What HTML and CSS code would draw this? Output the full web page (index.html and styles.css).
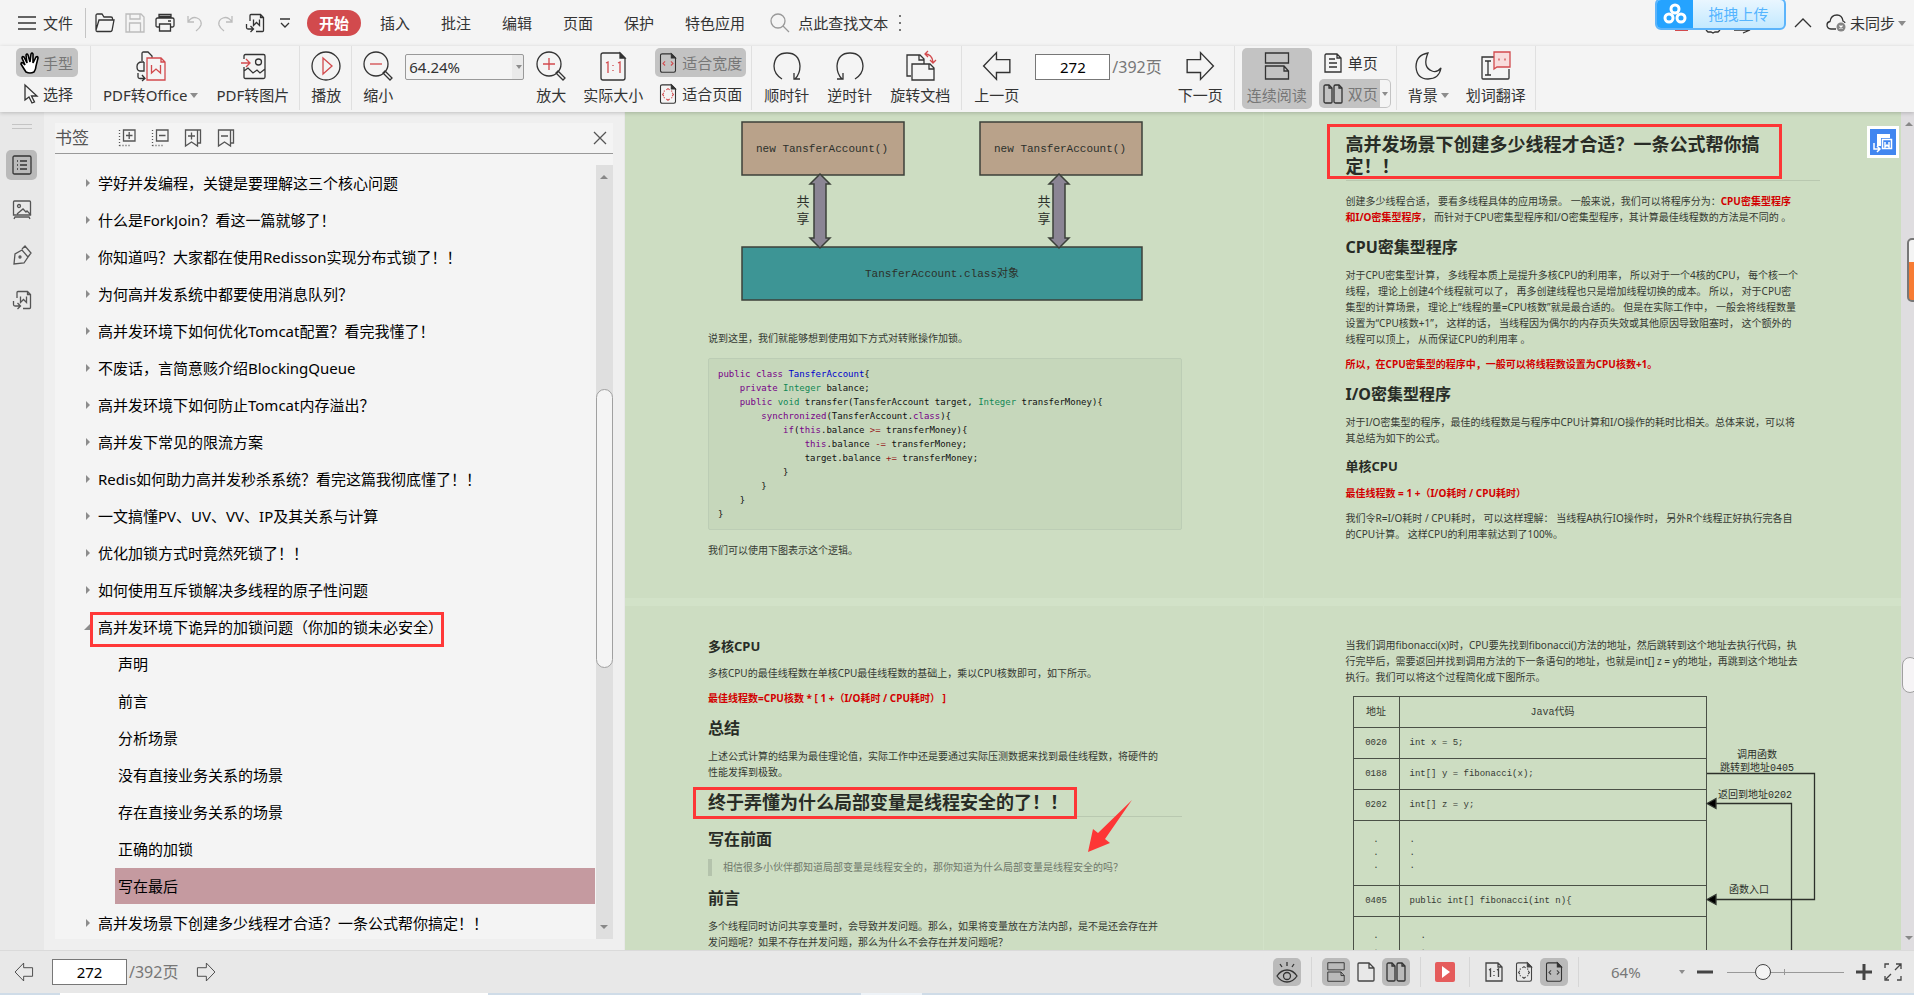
FILE: index.html
```html
<!DOCTYPE html>
<html lang="zh-CN">
<head>
<meta charset="utf-8">
<title>PDF 阅读器</title>
<link rel="stylesheet" href="styles.css">
</head>
<body>
<svg class="sprite" aria-hidden="true">
  <symbol id="i-word" viewBox="0 0 20 20"><path d="M5 8V2.500q0-1 1-1h9.500l3 3v13q0 1-1 1H11M15.500 1.500v3h3"/><path d="M8.500 6.500v6l3-3 3 3v-6M1.500 11v3.500q0 1.500 1.500 1.500h5M5.500 13l3 3-3 3"/></symbol>
  <symbol id="i-width" viewBox="0 0 20 24"><path d="M3 1h11l5 5v15q0 2-2 2H3q-2 0-2-2V3q0-2 2-2z"/><path d="M14 1v5h5z" fill="currentColor"/><path class="accent" d="M6.500 10L4 12.500 6.500 15M13.500 10l2.500 2.500-2.500 2.500"/></symbol>
  <symbol id="i-fit" viewBox="0 0 20 24"><path d="M3 1h11l5 5v15q0 2-2 2H3q-2 0-2-2V3q0-2 2-2z"/><path d="M14 1v5h5z" fill="currentColor"/><path class="accent" d="M8 7l2-1.500L12 7M8 18l2 1.500 2-1.500M5 10.500L3.500 12.500 5 14.500M15 10.500l1.500 2-1.500 2M6 8l-1 1M14 8l1 1M6 17l-1-1M14 17l1-1"/></symbol>
  <symbol id="i-left" viewBox="0 0 28 28"><path d="M1.500 14L13.500 1.500V8H26v12H13.500v6.500z"/></symbol>
  <symbol id="i-right" viewBox="0 0 28 28"><path d="M26.500 14L14.500 1.500V8H2v12h12.500v6.500z"/></symbol>
  <symbol id="i-two" viewBox="0 0 20 20"><path d="M6 1H2.500Q1 1 1 2.500v15Q1 19 2.500 19H8q1 0 1-1V4zM16 1h-3.500Q11 1 11 2.500v15q0 1.500 1.500 1.500H18q1 0 1-1V4z"/><path d="M6 1v3h3M16 1v3h3"/></symbol>
  <symbol id="i-cont" viewBox="0 0 26 28"><path d="M1.500 1h23v10h-23zM1.500 27V14H20l4.500 5v8zM20 14v5h4.500"/></symbol>
</svg>

<header class="menubar">
  <button class="file"><svg width="18" height="14" viewBox="0 0 18 14"><path d="M0 1h18M0 7h18M0 13h18"/></svg>文件</button>
  <div class="quick">
    <button aria-label="打开"><svg width="20" height="20" viewBox="0 0 20 20"><path d="M1 17V2.500Q1 1 2.500 1H7l2 3h7q1.500 0 1.500 1.500V7M1 17l3-10h15l-2 10.500q-.3 1-1.500 1H2Q1 18.500 1 17z"/></svg></button>
    <button class="dim" aria-label="保存"><svg width="20" height="20" viewBox="0 0 20 20"><path d="M1 1h15l3 3v15H1zM5 1v5h10V1M4.500 19v-9h11v9"/></svg></button>
    <button aria-label="打印"><svg width="20" height="20" viewBox="0 0 20 20"><path d="M4 5V1.500h12V5M4 14H2.500Q1 14 1 12.500v-6Q1 5 2.500 5h15Q19 5 19 6.500v6q0 1.500-1.500 1.500H16M4.500 11h11v7h-11zM13 8h3M4 3.500h12"/></svg></button>
    <button class="dim" aria-label="撤销"><svg width="20" height="20" viewBox="0 0 20 20"><path d="M3 3v6h6M3 9q4-6 9-4t4 7q-1 3-5 6"/></svg></button>
    <button class="dim" aria-label="重做"><svg width="20" height="20" viewBox="0 0 20 20"><path d="M17 3v6h-6M17 9q-4-6-9-4t-4 7q1 3 5 6"/></svg></button>
    <button aria-label="转为Word"><svg width="20" height="20"><use href="#i-word"/></svg></button>
    <button aria-label="更多"><svg width="20" height="20" viewBox="0 0 20 20"><path d="M5 6h10M6 10l4 4 4-4"/></svg></button>
  </div>
  <nav class="tabs">
    <button class="on">开始</button><button>插入</button><button>批注</button><button>编辑</button><button>页面</button><button>保护</button><button>特色应用</button>
  </nav>
  <button class="find"><svg width="20" height="20" viewBox="0 0 20 20"><circle cx="8" cy="8" r="7"/><path d="M13 13l6 6"/></svg>点此查找文本<svg class="dots" width="4" height="20" viewBox="0 0 4 20"><path d="M1 2h2v2H1zM1 9h2v2H1zM1 16h2v2H1z"/></svg></button>
  <div class="sync">
    <div class="hidden-tools"><svg width="90" height="6" viewBox="0 0 90 6"><path d="M1 0h13v1H1z" fill="#d24a4d" stroke="none"/><path d="M32 0l2 2h3l2 1 2-1h3l2-2M60 0h16l-7 3"/></svg></div>
    <button class="upload"><span class="upload-mark"><svg width="24" height="22" viewBox="0 0 24 22"><g fill="none" stroke="#fff" stroke-width="3"><circle cx="12" cy="6" r="4"/><circle cx="6" cy="15" r="4"/><circle cx="18" cy="15" r="4"/></g></svg></span><span class="upload-text">拖拽上传</span></button>
    <button aria-label="折叠"><svg width="18" height="12" viewBox="0 0 18 12"><path d="M1 10l8-8 8 8"/></svg></button>
    <button class="cloud"><svg width="20" height="18" viewBox="0 0 20 18"><path d="M10 15H5q-4-.5-4-4 0-3 3-3.500Q5 1 11 1q5 0 6 6 2 1 2 2"/><circle cx="15" cy="13" r="4.500" fill="#858585" stroke="none"/><path d="M13.500 11.500l3 3M16.500 11.500l-3 3" stroke="#fff"/></svg>未同步<i class="caret"></i></button>
  </div>
</header>

<div class="ribbon">
  <div class="group g-hand">
    <button class="row on"><svg width="20" height="22" viewBox="0 0 20 22"><path class="bold" d="M6 20q-2-3-5-8 0-2 2-1l2 2L2 6q0-2 2-1l3 6L6 3q1-2 2 0l2 7 1-8q1-2 2 0v9l3-6q2-1 2 1l-2 8q0 3-2 6-4 2-8 0z"/></svg>手型</button>
    <button class="row"><svg width="20" height="22" viewBox="0 0 20 22"><path d="M5 2v15l4-3 3 6 2.500-1-3-6H17z"/></svg>选择</button>
  </div>
  <div class="group g-convert">
    <button class="tool"><svg width="30" height="30" viewBox="0 0 30 30"><path d="M6 10V2.500Q6 1 7.500 1H12l4 4v2M8 11H6q-5 0-5 4.500T4 20h4v-9M2 22v4q0 1.500 2 1.500h5M6 24l3 3.500L6 30"/><path class="accent" d="M11 7h14l4 4v18H11zM25 7v4h4M15.500 14v8l4.500-4 4.500 4v-8" /></svg><span>PDF转Office<i class="caret"></i></span></button>
    <button class="tool"><svg width="30" height="30" viewBox="0 0 30 30"><path d="M6 8V5q0-1.500 1.500-1.500h18Q27 3.500 27 5v21q0 1.500-1.500 1.500h-18Q6 27.500 6 26v-6l4-3 5 5 4-3 3 3 5-4M6 16v4"/><circle cx="20.500" cy="11" r="3"/><path class="accent" d="M3 12h8M8 8l4 4-4 4"/></svg><span>PDF转图片</span></button>
  </div>
  <div class="group g-play">
    <button class="tool"><svg width="30" height="30" viewBox="0 0 30 30"><circle cx="15" cy="15" r="14"/><path class="accent" d="M12 7l9 8-9 8z"/></svg><span>播放</span></button>
  </div>
  <div class="group g-zoom">
    <button class="tool"><svg width="30" height="30" viewBox="0 0 30 30"><circle cx="13" cy="13" r="12"/><path d="M20 22l2-2 7 7-2 2z"/><path class="accent" d="M7 13h12"/></svg><span>缩小</span></button>
    <div class="zoombox"><select aria-label="缩放比例"><option>64.24%</option></select><i class="caret"></i></div>
    <button class="tool"><svg width="30" height="30" viewBox="0 0 30 30"><circle cx="13" cy="13" r="12"/><path d="M20 22l2-2 7 7-2 2z"/><path class="accent" d="M7 13h12M13 7v12"/></svg><span>放大</span></button>
    <button class="tool actual"><svg width="30" height="30" viewBox="0 0 30 30"><path d="M5 2h17l5 5v20q0 2-2 2H5q-2 0-2-2V4q0-2 2-2z"/><path d="M22 2v5h5z" fill="currentColor"/><path class="accent" d="M8 12l2-1v11M20 12l2-1v11M15 14v1M15 19v1"/></svg><span>实际大小</span></button>
    <div class="stack">
      <button class="row on"><svg width="18" height="20"><use href="#i-width"/></svg>适合宽度</button>
      <button class="row"><svg width="18" height="20"><use href="#i-fit"/></svg>适合页面</button>
    </div>
  </div>
  <div class="group g-rotate">
    <button class="tool"><svg width="30" height="30" viewBox="0 0 30 30"><path d="M10 28Q2 23 2 15 3 2 15 2t13 13q0 8-5 13M22 22v6h6"/></svg><span>顺时针</span></button>
    <button class="tool"><svg width="30" height="30" viewBox="0 0 30 30"><path d="M20 28q8-5 8-13Q27 2 15 2T2 15q0 8 5 13M8 22v6H2"/></svg><span>逆时针</span></button>
    <button class="tool"><svg width="30" height="30" viewBox="0 0 30 30"><path d="M6 25H2V4h13l4 4v5M14 4v5h5M7 29V13h18l4 4v12zM24 13v5h5"/><path class="accent" d="M23 0l-3 3 3 3M20 3q7 0 8 8M25 9l3 3 3-3"/></svg><span>旋转文档</span></button>
  </div>
  <div class="group g-pager">
    <button class="tool"><svg width="30" height="30"><use href="#i-left"/></svg><span>上一页</span></button>
    <label class="page-no"><input value="272" aria-label="页码"><span>/392页</span></label>
    <button class="tool"><svg width="30" height="30"><use href="#i-right"/></svg><span>下一页</span></button>
  </div>
  <div class="group g-read">
    <button class="tool on"><svg width="26" height="30"><use href="#i-cont"/></svg><span>连续阅读</span></button>
    <div class="stack">
      <button class="row"><svg width="20" height="20" viewBox="0 0 20 20"><path d="M3 1h11l4 4v14H2V2zM14 1v4h4M6 6h6M6 10h8M6 14h8"/></svg>单页</button>
      <button class="row on split"><svg width="20" height="20"><use href="#i-two"/></svg>双页<span class="drop"><i class="caret"></i></span></button>
    </div>
  </div>
  <div class="group g-extra">
    <button class="tool"><svg width="30" height="30" viewBox="0 0 30 30"><path d="M15 2q-6 14 4 18 5 2 9-3-2 11-13 11T3 16Q3 4 15 2z"/></svg><span>背景<i class="caret"></i></span></button>
    <button class="tool"><svg width="30" height="30" viewBox="0 0 30 30"><path d="M13 6H1v21q0 1 1 1h25q1 0 1-1v-9M4 10h6M4 24h6M7 10v14"/><path class="accent fill" d="M13 1h16v15H16l-3 2z"/><path class="accent" d="M18 7.500v2M24 7.500v2"/></svg><span>划词翻译</span></button>
  </div>
</div>

<main class="work">
  <nav class="rail">
    <i class="grip"></i>
    <button class="on" aria-label="书签"><svg width="20" height="20" viewBox="0 0 20 20"><path d="M2.500 1h15Q19 1 19 2.500v15q0 1.500-1.500 1.500h-15Q1 19 1 17.500v-15Q1 1 2.500 1zM5 6h1M8 6h7M5 10h1M8 10h7M5 14h1M8 14h7"/></svg></button>
    <button aria-label="缩略图"><svg width="20" height="20" viewBox="0 0 20 20"><path d="M2.500 1h15q1 0 1 1v13h-17V2q0-1 1-1zM5 14l6-5 3 3 1-1 4 4M2 19l1-2h14l1 2"/><circle cx="7" cy="6" r="1.500"/></svg></button>
    <button aria-label="签名"><svg width="20" height="20" viewBox="0 0 20 20"><path d="M2 19l1-10 7-4 6 7-4 6zM10 4l3-3 6 7-3 4"/><circle cx="8" cy="12" r="1"/></svg></button>
    <button aria-label="转为Word"><svg width="20" height="20"><use href="#i-word"/></svg></button>
  </nav>
  <aside class="panel">
    <div class="panel-inner">
      <div class="panel-head">
        <h2>书签</h2>
        <button aria-label="展开"><svg width="18" height="18" viewBox="0 0 18 18"><path d="M5.500 1H17v11H5.500zM8 6.500h6.500M11.200 3v7"/><path stroke-dasharray="1 2" d="M1.500 1v16M1.500 16.500H12"/></svg></button>
        <button aria-label="折叠"><svg width="18" height="18" viewBox="0 0 18 18"><path d="M5.500 1H17v11H5.500zM8 6.500h6.500"/><path stroke-dasharray="1 2" d="M1.500 1v16M1.500 16.500H12"/></svg></button>
        <button aria-label="添加书签"><svg width="18" height="18" viewBox="0 0 18 18"><path d="M1.500 1h12v16l-6-4-6 4zM4 7h7M7.500 3.500v7M13.500 1h3v13h-3"/></svg></button>
        <button aria-label="删除书签"><svg width="18" height="18" viewBox="0 0 18 18"><path d="M1.500 1h12v16l-6-4-6 4zM4 7h7M13.500 1h3v13h-3"/></svg></button>
        <button class="close" aria-label="关闭"><svg width="14" height="14" viewBox="0 0 14 14"><path d="M1 1l12 12M13 1L1 13"/></svg></button>
      </div>
      <div class="panel-body">
        <ul class="tree">
          <li>学好并发编程，关键是要理解这三个核心问题</li>
          <li>什么是ForkJoin？看这一篇就够了！</li>
          <li>你知道吗？大家都在使用Redisson实现分布式锁了！！</li>
          <li>为何高并发系统中都要使用消息队列？</li>
          <li>高并发环境下如何优化Tomcat配置？看完我懂了！</li>
          <li>不废话，言简意赅介绍BlockingQueue</li>
          <li>高并发环境下如何防止Tomcat内存溢出？</li>
          <li>高并发下常见的限流方案</li>
          <li>Redis如何助力高并发秒杀系统？看完这篇我彻底懂了！！</li>
          <li>一文搞懂PV、UV、VV、IP及其关系与计算</li>
          <li>优化加锁方式时竟然死锁了！！</li>
          <li>如何使用互斥锁解决多线程的原子性问题</li>
          <li class="open"><span class="marked">高并发环境下诡异的加锁问题（你加的锁未必安全）</span></li>
          <li class="child">声明</li>
          <li class="child">前言</li>
          <li class="child">分析场景</li>
          <li class="child">没有直接业务关系的场景</li>
          <li class="child">存在直接业务关系的场景</li>
          <li class="child">正确的加锁</li>
          <li class="child current">写在最后</li>
          <li>高并发场景下创建多少线程才合适？一条公式帮你搞定！！</li>
        </ul>
        <div class="bar tree-bar"><i class="up"></i><i class="thumb"></i><i class="down"></i></div>
      </div>
    </div>
  </aside>

  <section class="viewer">
    <div class="pages">
      <article class="page first">
        <svg class="share" width="474" height="209" viewBox="0 0 474 209">
          <g stroke="#3c403a" stroke-width="1.500">
            <path fill="#b9a28a" d="M34 10h162v53H34zM272 10h162v53H272z"/>
            <path fill="#3d9595" d="M34 135h400v53H34z"/>
            <path fill="#8b8594" d="M112 62l10 10h-4v54h4l-10 10-10-10h4V72h-4zM351 62l10 10h-4v54h4l-10 10-10-10h4V72h-4z"/>
          </g>
          <g class="label" text-anchor="middle">
            <text x="114" y="40">new TansferAccount()</text>
            <text x="352" y="40">new TansferAccount()</text>
            <text x="234" y="165">TansferAccount.class对象</text>
            <g class="cn"><text x="95" y="94">共</text><text x="95" y="111">享</text><text x="336" y="94">共</text><text x="336" y="111">享</text></g>
          </g>
        </svg>
        <p>说到这里，我们就能够想到使用如下方式对转账操作加锁。</p>
        <pre class="code"><code><b>public</b> <b>class</b> <em>TansferAccount</em>{</code><code>    <b>private</b> <s>Integer</s> balance;</code><code>    <b>public</b> <s>void</s> transfer(TansferAccount target, <s>Integer</s> transferMoney){</code><code>        <b>synchronized</b>(TansferAccount.<b>class</b>){</code><code>            <b>if</b>(<b>this</b>.balance <u>&gt;=</u> transferMoney){</code><code>                <b>this</b>.balance <u>-=</u> transferMoney;</code><code>                target.balance <u>+=</u> transferMoney;</code><code>            }</code><code>        }</code><code>    }</code><code>}</code></pre>
        <p>我们可以使用下图表示这个逻辑。</p>
      </article>

      <article class="page second">
        <h1 class="mark-wide">高并发场景下创建多少线程才合适？一条公式帮你搞<br>定！！</h1>
        <p>创建多少线程合适， 要看多线程具体的应用场景。 一般来说，我们可以将程序分为：<strong>CPU密集型程序</strong><br><strong>和I/O密集型程序</strong>， 而针对于CPU密集型程序和I/O密集型程序，其计算最佳线程数的方法是不同的 。</p>
        <h2>CPU密集型程序</h2>
        <p>对于CPU密集型计算， 多线程本质上是提升多核CPU的利用率， 所以对于一个4核的CPU， 每个核一个<br>线程， 理论上创建4个线程就可以了， 再多创建线程也只是增加线程切换的成本。 所以， 对于CPU密<br>集型的计算场景， 理论上“线程的量=CPU核数”就是最合适的。 但是在实际工作中， 一般会将线程数量<br>设置为“CPU核数+1”， 这样的话， 当线程因为偶尔的内存页失效或其他原因导致阻塞时， 这个额外的<br>线程可以顶上， 从而保证CPU的利用率 。</p>
        <p><strong>所以，在CPU密集型的程序中，一般可以将线程数设置为CPU核数+1。</strong></p>
        <h2>I/O密集型程序</h2>
        <p>对于I/O密集型的程序，最佳的线程数是与程序中CPU计算和I/O操作的耗时比相关。总体来说，可以将<br>其总结为如下的公式。</p>
        <h3>单核CPU</h3>
        <p><strong>最佳线程数 = 1 +（I/O耗时 / CPU耗时）</strong></p>
        <p>我们令R=I/O耗时 / CPU耗时， 可以这样理解： 当线程A执行IO操作时， 另外R个线程正好执行完各自<br>的CPU计算。 这样CPU的利用率就达到了100%。</p>
      </article>

      <article class="page third">
        <h3>多核CPU</h3>
        <p>多核CPU的最佳线程数在单核CPU最佳线程数的基础上，乘以CPU核数即可，如下所示。</p>
        <p><strong>最佳线程数=CPU核数 * [ 1 +（I/O耗时 / CPU耗时） ]</strong></p>
        <h2>总结</h2>
        <p>上述公式计算的结果为最佳理论值，实际工作中还是要通过实际压测数据来找到最佳线程数，将硬件的<br>性能发挥到极致。</p>
        <h1 class="mark-line">终于弄懂为什么局部变量是线程安全的了！！</h1>
        <h2>写在前面</h2>
        <blockquote>相信很多小伙伴都知道局部变量是线程安全的，那你知道为什么局部变量是线程安全的吗？
          <svg class="pointer" width="46" height="54" viewBox="0 0 46 54"><path fill="#fd3636" d="M1 53L6 30l5 4L45 1 18 40l5 4z"/></svg>
        </blockquote>
        <h2>前言</h2>
        <p>多个线程同时访问共享变量时，会导致并发问题。那么，如果将变量放在方法内部，是不是还会存在并<br>发问题呢？如果不存在并发问题，那么为什么不会存在并发问题呢？</p>
      </article>

      <article class="page fourth">
        <p>当我们调用fibonacci(x)时，CPU要先找到fibonacci()方法的地址，然后跳转到这个地址去执行代码，执<br>行完毕后，需要返回并找到调用方法的下一条语句的地址，也就是int[] z = y的地址，再跳到这个地址去<br>执行。我们可以将这个过程简化成下图所示。</p>
        <div class="calls">
          <table>
            <tr><th>地址</th><th>Java代码</th></tr>
            <tr><td>0020</td><td>int x = 5;</td></tr>
            <tr><td>0188</td><td>int[] y = fibonacci(x);</td></tr>
            <tr><td>0202</td><td>int[] z = y;</td></tr>
            <tr class="tall"><td>.<br>.<br>.</td><td>.<br>.<br>.</td></tr>
            <tr><td>0405</td><td>public int[] fibonacci(int n){</td></tr>
            <tr class="tall"><td>.<br>.<br>.</td><td class="deep">.<br>.<br>.</td></tr>
          </table>
          <svg width="112" height="286" viewBox="0 0 112 286">
            <path fill="none" stroke="#2c302a" d="M0 77.500h107.500v126H8M8 107.500h76.500V286"/>
            <path fill="#000" d="M0 107.500l9-5v10zM0 203.500l9-5v10z"/>
            <g class="label cn" text-anchor="middle"><text x="50" y="62">调用函数</text><text x="50" y="75">跳转到地址0405</text><text x="48" y="102">返回到地址0202</text><text x="42" y="197">函数入口</text></g>
          </svg>
        </div>
      </article>
    </div>
    <button class="convert" aria-label="转换"><svg width="26" height="26" viewBox="0 0 26 26"><path fill="#fff" stroke="none" d="M7 5h13v4h-9v8H7z"/><path fill="none" stroke="#fff" stroke-width="1.500" d="M12.500 10.500h9v9h-9zM15 13v5l2-2 2 2v-5M4 14v6h5M7 17l3 3-3 3"/></svg></button>
    <div class="bar page-bar"><i class="up"></i><i class="thumb"></i><i class="down"></i><i class="dock"></i></div>
  </section>
</main>

<footer class="status">
  <button aria-label="上一页"><svg width="20" height="20"><use href="#i-left"/></svg></button>
  <label class="page-no"><input value="272" aria-label="当前页"><span>/392页</span></label>
  <button class="next" aria-label="下一页"><svg width="20" height="20"><use href="#i-right"/></svg></button>
  <div class="modes">
    <button class="on" aria-label="护眼"><svg width="22" height="22" viewBox="0 0 22 22"><path d="M1 15q4-6 10-6t10 6q-4 6-10 6T1 15zM4 3l2 3M11 1v4M18 3l-2 3"/><circle cx="11" cy="15" r="3.500"/></svg></button>
    <i class="sep"></i>
    <button class="on" aria-label="连续"><svg width="20" height="20"><use href="#i-cont"/></svg></button>
    <button aria-label="单页"><svg width="20" height="20" viewBox="0 0 20 20"><path d="M3 1h10l5 5v12q0 1-1 1H3q-1 0-1-1V2q0-1 1-1zM13 1v5h5"/></svg></button>
    <button class="on" aria-label="双页"><svg width="20" height="20"><use href="#i-two"/></svg></button>
    <i class="sep"></i>
    <button aria-label="播放"><svg width="20" height="20" viewBox="0 0 20 20"><rect width="20" height="20" rx="2" fill="#e55c5c" stroke="none"/><path d="M7 4l8 6-8 6z" fill="#fff" stroke="none"/></svg></button>
    <i class="sep"></i>
    <button aria-label="实际大小"><svg width="20" height="20" viewBox="0 0 20 20"><path d="M2 1h12l4 4v14H2zM14 1v4h4M5 8l1.500-1v8M13 8l1.500-1v8M10 9v1M10 13v1"/></svg></button>
    <button aria-label="适合页面"><svg width="20" height="20"><use href="#i-fit"/></svg></button>
    <button class="on" aria-label="适合宽度"><svg width="20" height="20"><use href="#i-width"/></svg></button>
    <i class="sep"></i>
  </div>
  <button class="percent">64%<i class="caret"></i></button>
  <div class="scale">
    <button aria-label="缩小"><svg width="16" height="16" viewBox="0 0 16 16"><path class="thick" d="M0 8h16"/></svg></button>
    <div class="slider"><input type="range" min="0" max="100" value="28" aria-label="缩放"><i></i></div>
    <button aria-label="放大"><svg width="16" height="16" viewBox="0 0 16 16"><path class="thick" d="M0 8h16M8 0v16"/></svg></button>
    <button aria-label="全屏"><svg width="18" height="18" viewBox="0 0 18 18"><path d="M1 5V1h4M1 13v4h4M17 13v4h-4M12 1h5v5M17 1l-6 6M7 11l-5 5"/></svg></button>
  </div>
</footer>
<div class="desk"><i></i><b></b></div>
</body>
</html>
```
FILE: styles.css
```css
*, *::before, *::after { box-sizing: border-box; }
html, body { height: 100%; }
body {
  margin: 0;
  display: flex;
  flex-direction: column;
  overflow: hidden;
  background: #f4f4f4;
  color: #333;
  font: 15px/20px "Noto Sans", "Noto Sans CJK SC", sans-serif;
  text-spacing-trim: space-all;
  white-space: nowrap;
}
.sprite { display: none; }
button, input, select { font: inherit; color: inherit; }
button {
  display: flex;
  align-items: center;
  padding: 0;
  border: 0;
  background: none;
}
button svg { flex: none; }
svg, symbol { fill: none; stroke: currentColor; stroke-width: 1.3; overflow: visible; }
svg text { stroke: none; }
.accent { stroke: var(--accent, #d24a4d); }
.fill { fill: #f8dcdc; }
.bold { stroke: #000; fill: #fff; stroke-width: 1.6; }
.thick { stroke-width: 3; }
.caret {
  display: inline-block;
  border: 4px solid transparent;
  border-top: 5px solid #8c8c8c;
  border-bottom: 0;
}

/* menu row */
.menubar { display: flex; align-items: center; height: 46px; padding-left: 18px; flex: none; }
.file { gap: 7px; height: 30px; padding-right: 12px; border-right: 1px solid #c4c4c4; }
.quick { display: flex; gap: 10px; margin-left: 9px; }
.dim { color: #bcbcbc; }
.tabs { display: flex; gap: 31px; margin-left: 12px; }
.tabs .on {
  height: 26px;
  margin-right: -12px;
  padding: 0 12px;
  border-radius: 13px;
  background: #d24a4d;
  color: #fff;
  font-weight: 700;
}
.find { gap: 8px; margin-left: 25px; }
.find svg { stroke: #999; }
.find .dots { fill: #777; stroke: none; margin-left: 2px; }
.sync { position: relative; display: flex; align-items: center; gap: 14px; margin-left: auto; padding-right: 8px; }
.cloud { gap: 4px; }
.cloud .caret { margin-left: -1px; }
.upload {
  position: absolute;
  left: -139px;
  top: -15px;
  width: 131px;
  height: 32px;
  align-items: stretch;
  border: 2px solid #5cb4fb;
  border-radius: 6px;
  overflow: hidden;
  background: linear-gradient(#e9f6ff, #c3e9ff);
  color: #55b5ff;
}
.upload-mark { display: grid; place-items: center; width: 36px; background: #25a3ff; }
.upload-text { flex: 1; align-self: center; text-align: center; }
.hidden-tools { position: absolute; left: -120px; top: 17px; line-height: 0; }

/* ribbon */
.ribbon { display: flex; height: 66px; flex: none; background: #f4f4f4; box-shadow: 0 1px 4px #0003; z-index: 2; }
.group { display: flex; align-items: flex-start; padding-top: 2px; border-right: 1px solid #e0e0e0; height: 64px; }
.tool { flex-direction: column; gap: 4px; padding-top: 3px; height: 61px; }
.row { height: 29px; gap: 5px; padding: 0 4px; border-radius: 5px; }
.on { background: #c3c3c3; color: #777; }
.on svg { color: #333; }
.stack, .g-hand { display: flex; flex-direction: column; gap: 2px; }
.g-hand { padding-left: 16px; padding-right: 12px; }
.g-hand .row { width: 62px; gap: 3px; }
.g-convert { gap: 18px; padding-left: 12px; padding-right: 10px; }
.tool .caret { margin-left: 3px; vertical-align: 3px; }
.g-play { padding-left: 11px; padding-right: 10px; }
.g-zoom { gap: 12px; padding-left: 11px; padding-right: 5px; }
.actual { margin-left: 5px; }
.zoombox { position: relative; margin-top: 6px; }
.zoombox select {
  appearance: none;
  display: block;
  width: 119px;
  height: 26px;
  padding: 0 3px;
  border: 1px solid #999;
  border-radius: 2px;
  background: linear-gradient(to left, #eaeaea 11px, #f4f4f4 11px);
}
.zoombox .caret { position: absolute; right: 2px; top: 11px; border-width: 4px 3px 0; }
.g-rotate { gap: 18px; padding-left: 12px; padding-right: 11px; }
.g-pager { gap: 16px; padding-left: 12px; padding-right: 11px; }
.page-no { display: flex; align-items: center; gap: 2px; color: #777; font-size: 16px; }
.page-no input {
  width: 75px;
  height: 26px;
  border: 1px solid #777;
  padding: 0;
  background: #fff;
  color: #000;
  font-size: 15px;
  text-align: center;
}
.g-pager .page-no { margin-top: 6px; }
.g-read { gap: 7px; padding-left: 7px; padding-right: 5px; }
.g-read .tool { width: 70px; border-radius: 5px; }
.g-read .row { width: 72px; }
.split { position: relative; }
.drop {
  position: absolute;
  right: 1px;
  top: 1px;
  bottom: 1px;
  width: 10px;
  display: grid;
  place-items: center;
  border-radius: 0 4px 4px 0;
  background: #f4f4f4;
}
.drop .caret { margin: 0; border-width: 4px 3px 0; }
.g-extra { gap: 17px; padding-left: 11px; padding-right: 9px; }

/* side rail and bookmarks */
.work { display: flex; flex: 1; min-height: 0; }
.rail { display: flex; flex-direction: column; align-items: center; gap: 15px; width: 44px; padding: 12px 7px 0 6px; background: #e8e8e8; color: #555; }
.grip { width: 20px; height: 5px; border: solid #c4c4c4; border-width: 1px 0; margin-bottom: 6px; }
.rail button { width: 31px; height: 30px; justify-content: center; border-radius: 5px; }
.rail .on { background: #bababa; }
.panel { display: flex; width: 581px; flex: none; padding: 11px 11px 11px 11px; background: #efefef; border-right: 1px solid #e8e8e8; }
.panel-inner { display: flex; flex-direction: column; flex: 1; min-width: 0; background: #f4f4f4; }
.panel-head { display: flex; align-items: center; gap: 15px; height: 31px; flex: none; border-bottom: 1px solid #999; color: #555; }
.panel-head h2 { margin: 0 14px 0 0; font-size: 17px; font-weight: 400; }
.close { margin: 0 6px 0 auto; }
.panel-body { display: flex; flex: 1; min-height: 0; padding-top: 11px; }
.tree { flex: 1; margin: 0; padding: 0; list-style: none; color: #000; }
.tree li { display: flex; align-items: center; height: 36px; margin: 0 1px 1px 31px; }
.tree li::before { content: ""; width: 4px; margin-right: 8px; border: solid transparent; border-width: 4px 0 4px 4px; border-left-color: #8c8c8c; }
.tree .open::before { width: 6px; margin: 0 8px 0 -2px; border-width: 0 0 6px 6px; border-color: transparent transparent #8c8c8c; }
.tree .child { margin-left: 60px; padding-left: 3px; }
.tree .child::before { display: none; }
.tree .current { background: #c59aa0; }
.marked { position: relative; }
.marked::after { content: ""; position: absolute; left: -8px; top: -5px; width: 354px; height: 35px; border: 3px solid #ff3838; }
.bar { position: relative; background: #dfdfdf; }
.up, .down, .thumb, .dock { position: absolute; }
.up { top: 10px; right: 5px; border: 4px solid transparent; border-top: 0; border-bottom-color: #888; }
.down { bottom: 10px; right: 5px; border: 4px solid transparent; border-bottom: 0; border-top-color: #888; }
.tree-bar { width: 17px; }
.tree-bar .thumb { left: 0; right: 0; top: 29%; height: 36%; border: 1px solid #a0a0a0; border-radius: 9px; background: #f4f4f4; }

/* document */
.viewer { position: relative; display: flex; flex: 1; min-width: 0; overflow: hidden; background: #d2e2c8; }
.pages { display: grid; grid-template-columns: 1fr 1fr; grid-auto-rows: max-content; gap: 8px 1px; flex: 1; align-content: start; min-width: 0; }
.page { min-width: 0; padding: 32px 81px 47px 83px; background: #cdddc2; color: #353a33; font-size: 10px; line-height: 16px; }
.page.first { padding-top: 0; padding-bottom: 20px; }
.page.second { padding-top: 21px; }
.page.second, .page.fourth { padding-left: 82px; }
.page.third, .page.fourth { padding-bottom: 0; }
.page.fourth { padding-top: 31px; }
.page p { margin: 9px 0; }
.page h1, .page h2, .page h3 { color: #282c26; font-weight: 700; }
.page h1 { position: relative; margin: 11px 0 12px; padding-bottom: 3px; border-bottom: 1px solid #b9c8b0; font-size: 18px; line-height: 22px; }
.page h2 { margin: 12px 0 10px; font-size: 16px; line-height: 20px; }
.page h3 { margin: 12px 0 11px; font-size: 13px; line-height: 16px; }
.page > :first-child { margin-top: 0; }
strong { color: #d20000; }
.mark-wide::after, .mark-line::after { content: ""; position: absolute; border: 3px solid #fd3636; }
.mark-wide::after { left: -19px; top: -9px; width: 455px; height: 55px; }
.mark-line::after { left: -15px; top: -4px; width: 384px; height: 32px; }
blockquote { position: relative; margin: 10px 0 12px; padding-left: 11px; border-left: 4px solid #b4c3ac; line-height: 17px; color: #6f786b; }
.pointer { position: absolute; left: 375px; top: -60px; stroke: none; }
.share { display: block; }
.label { font: 11px "Liberation Mono", "Noto Sans CJK SC", monospace; fill: #2c302a; stroke: none; }
.share .cn { font-size: 13px; }
.code {
  margin: 12px 0;
  padding: 8px 9px;
  border: 1px solid #bccdb5;
  border-radius: 2px;
  background: #c6d7bb;
  color: #111;
  font: 9px/14px "DejaVu Sans Mono", monospace;
}
.code code { display: block; font: inherit; }
.code b { color: #770088; font-weight: 400; }
.code em { color: #0000cc; font-style: normal; }
.code s { color: #118855; text-decoration: none; }
.code u { color: #981a1a; text-decoration: none; }
.calls { display: flex; align-items: flex-start; margin: 11px 0 0 7px; }
.calls table { width: 354px; flex: none; border-collapse: collapse; font: 9px/13px "Liberation Mono", "Noto Sans CJK SC", monospace; }
.calls svg { flex: none; }
.calls .cn { font-size: 10px; }
.calls td, .calls th { height: 31px; padding: 0 10px; border: 1px solid #4a5046; font-weight: 400; }
.calls th { font-size: 10px; }
.calls td:first-child, .calls th:first-child { width: 46px; padding: 0; text-align: center; }
.calls .tall td { height: 65px; }
.calls .deep { padding-left: 21px; }
.convert { position: absolute; right: 15px; top: 14px; width: 32px; height: 32px; justify-content: center; border: 3px solid #fff; background: #4186f0; }
.page-bar { width: 13px; flex: none; background: #dfdde0; }
.page-bar .up, .page-bar .down { right: 1px; }
.page-bar .thumb { left: 1px; right: -4px; top: 65%; height: 36px; border: 1px solid #a0a0a0; border-radius: 8px; background: #f6f4f6; }
.page-bar .dock { right: -6px; top: 15%; width: 13px; height: 64px; border: 2px solid #777; border-radius: 5px; background: linear-gradient(#f4f4f4 22px, #f77b33 22px); }

/* status bar */
.status { display: flex; align-items: center; height: 43px; flex: none; padding: 0 12px 0 14px; border-top: 1px solid #dadada; background: #e8e8e8; color: #444; z-index: 2; }
.status .page-no { margin: 0 18px; }
.modes { display: flex; align-items: center; gap: 2px; margin-left: auto; --accent: #444; }
.modes button { width: 28px; height: 28px; justify-content: center; border-radius: 5px; }
.modes .on { background: #bababa; }
.sep { width: 1px; height: 30px; margin: 0 8px; background: #d6d6d6; }
.percent { justify-content: space-between; width: 74px; margin-left: 24px; color: #777; }
.percent .caret { border-width: 4px 3px 0; }
.scale { display: flex; align-items: center; gap: 12px; margin-left: 12px; }
.slider { position: relative; display: flex; width: 117px; margin-left: 2px; }
.slider input { appearance: none; width: 100%; height: 20px; margin: 0; background: linear-gradient(#999, #999) center / 100% 1px no-repeat; }
.slider input::-webkit-slider-thumb { appearance: none; width: 16px; height: 16px; border: 1px solid #444; border-radius: 50%; background: #f4f4f4; }
.slider i { position: absolute; left: 57px; top: 7px; width: 1px; height: 6px; background: #999; }
.desk { display: flex; height: 2px; flex: none; padding-left: 60px; background: #cfdce8; }
.desk i { width: 428px; background: #fff; }
.desk b { width: 61px; margin-left: 373px; background: #eef3f8; }
```
